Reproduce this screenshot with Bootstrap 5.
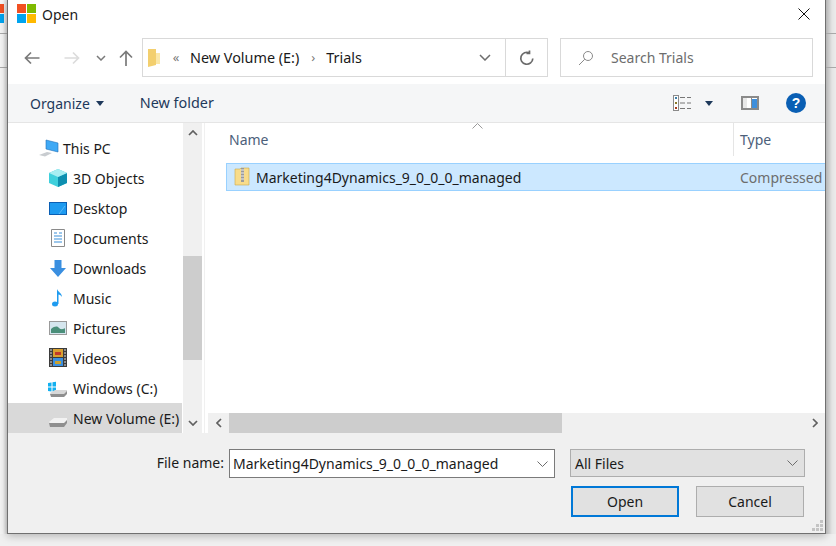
<!DOCTYPE html>
<html lang="en">
<head>
  <meta charset="UTF-8" />
  <meta name="viewport" content="width=device-width, initial-scale=1.0"/>
  <title>Open</title>
  <link href="https://cdn.jsdelivr.net/npm/bootstrap@5.3.2/dist/css/bootstrap.min.css" rel="stylesheet">
  <style>
    body {
      background-color: #f0f0f0;
      font-family: "Noto Sans", "Open Sans", sans-serif;
      font-size: 14px;
      color: #1a1a1a;
      width: 836px;
      height: 546px;
      overflow: hidden;
    }
    svg { display: block; flex: none; }
    .back-left, .back-right { height: 534px; }
    .back-left { width: 7px; background: linear-gradient(90deg, #f4f4f4 0, #f4f4f4 3px, #d4d4d4 7px); }
    .back-right { width: 10px; background: linear-gradient(90deg, #b4b4b4 0, #e4e4e4 6px, #ececec 10px); }
    .back-seg { height: 34px; border-bottom: 1px solid #a8a8a8; }
    .dlg {
      width: 819px;
      height: 534px;
      background: #fff;
      border: 1px solid #707070;
      border-top: 0;
      box-shadow: 0 2px 8px rgba(0,0,0,.25);
    }
    .title-bar { height: 30px; padding: 4px 15px 0 9px; }
    .title-text { margin-left: 6px; line-height: 22px; }
    .nav-bar { height: 54px; padding: 8px 12px 7px 16px; }
    .nav-arrows { width: 118px; }
    .up-arrow { margin-left: 13px; }
    .addr-box, .search-box { height: 39px; border: 1px solid #d9d9d9; }
    .addr-box { width: 406px; font-size: 14.4px; }
    .addr-folder { margin-left: 5px; }
    .addr-mark { color: #7a7a7a; font-size: 13px; width: 12px; text-align: center; }
    .addr-mark.first { margin-left: 10px; }
    .addr-vol { margin-left: 8px; }
    .addr-sep { margin-left: 8px; }
    .addr-leaf { margin-left: 7px; }
    .addr-drop { margin-right: 14px; }
    .addr-btn { width: 42px; height: 100%; border-left: 1px solid #d9d9d9; }
    .search-box { width: 253px; margin-left: 12px; padding-left: 17px; color: #6d6d6d; }
    .search-text { margin-left: 17px; }
    .tool-bar { height: 39px; background: #f5f6f7; border-bottom: 1px solid #e5e5e5; padding: 0 19px 0 22px; color: #1e395b; }
    .tool-new { margin-left: 36px; font-size: 14.4px; }
    .caret-down { width: 0; height: 0; border: 4px solid transparent; border-top: 5px solid #1e395b; border-bottom: 0; margin-left: 6px; }
    .caret-view { margin-left: 14px; }
    .pane-ico { margin-left: 28px; }
    .help-ico { margin-left: 27px; }
    .panes { height: 310px; }
    .tree-pane { width: 174px; padding-top: 10px; }
    .tree-row { height: 30px; padding-left: 40px; gap: 6px; white-space: nowrap; }
    .tree-row.top { padding-left: 32px; gap: 4px; }
    .tree-row.active { background: #d9d9d9; }
    .tree-ico { width: 20px; height: 20px; margin-left: -1px; }
    .vscroll { width: 19px; margin-left: 1px; background: #f0f0f0; }
    .vscroll-thumb { height: 104px; background: #cdcdcd; }
    .vscroll-track { height: 113px; }
    .sb-arrow { height: 20px; }
    .split { width: 3px; background: #fff; border-right: 1px solid #f0f0f0; }
    .list-pane { min-width: 0; }
    .list-head { height: 33px; color: #4c607a; padding-left: 24px; }
    .head-name { width: 504px; }
    .head-type { padding-left: 6px; height: 100%; border-left: 1px solid #e5e5e5; }
    .sort-up { top: 0; left: 267px; }
    .list-body { padding: 7px 0 0 21px; }
    .file-row { height: 28px; background: #cce8ff; border: 1px solid #99d1ff; border-right: 0; padding-left: 7px; white-space: nowrap; }
    .file-name { width: 484px; margin-left: 6px; }
    .file-type { color: #6d6d6d; }
    .hscroll { height: 20px; background: #f0f0f0; margin-left: 3px; }
    .hscroll-thumb { width: 333px; background: #cdcdcd; height: 100%; }
    .hs-btn { width: 21px; height: 100%; }
    .dlg-foot { position: relative; height: 100px; background: #f0f0f0; padding: 16px 20px 0 0; }
    .foot-label { width: 221px; text-align: right; padding-right: 5px; }
    .name-box { width: 326px; height: 29px; background: #fff; border: 1px solid #7a7a7a; padding: 0 6px 0 3px; }
    .type-box { width: 235px; height: 28px; margin-left: 15px; background: #e1e1e1; border: 1px solid #adadad; padding: 0 6px 0 4px; }
    .foot-btn { width: 108px; height: 31px; padding: 0; font-size: 14px; border-radius: 0; color: #1a1a1a; background: #e1e1e1; border: 1px solid #adadad; }
    .foot-btn.default-btn { border: 2px solid #0078d7; }
    .btn-row { margin-top: 8px; margin-left: 563px; gap: 17px; }
    .grip { right: 1px; bottom: 1px; }
  </style>
</head>
<body class="d-flex">
  <!-- window behind the dialog -->
  <div class="back-left">
    <div class="back-seg pt-1">
      <svg width="4" height="19" viewBox="0 0 4 19"><rect width="4" height="9" fill="#f25022"/><rect y="10" width="4" height="9" fill="#00a4ef"/></svg>
    </div>
    <div class="back-seg"></div>
  </div>

  <div class="dlg d-flex flex-column">
    <!-- title -->
    <div class="title-bar d-flex align-items-start">
      <svg width="19" height="19" viewBox="0 0 19 19"><rect width="9" height="9" fill="#f25022"/><rect x="10" width="9" height="9" fill="#7fba00"/><rect y="10" width="9" height="9" fill="#00a4ef"/><rect x="10" y="10" width="9" height="9" fill="#ffb900"/></svg>
      <span class="title-text">Open</span>
      <svg class="ms-auto mt-1" width="12" height="12" viewBox="0 0 12 12"><path d="M.5.5l11 11M11.500.5l-11 11" stroke="#111" fill="none"/></svg>
    </div>

    <!-- nav -->
    <div class="nav-bar d-flex align-items-center">
      <div class="nav-arrows d-flex align-items-center">
        <svg width="16" height="14" viewBox="0 0 16 14"><path d="M15.500 7H1.500M7 1.500L1.500 7 7 12.500" stroke="#7a7a7a" stroke-width="1.700" fill="none"/></svg>
        <svg class="ms-4" width="16" height="14" viewBox="0 0 16 14"><path d="M.5 7h14M9 1.500L14.500 7 9 12.500" stroke="#dcdcdc" stroke-width="1.700" fill="none"/></svg>
        <svg class="ms-3" width="10" height="6" viewBox="0 0 10 6"><path d="M1 1l4 4 4-4" stroke="#7a7a7a" stroke-width="1.500" fill="none"/></svg>
        <svg class="up-arrow" width="14" height="16" viewBox="0 0 14 16"><path d="M7 16V1.500M1 7.500l6-6 6 6" stroke="#7a7a7a" stroke-width="1.700" fill="none"/></svg>
      </div>
      <div class="addr-box d-flex align-items-center">
        <svg class="addr-folder" width="12" height="18" viewBox="0 0 12 18"><path d="M0 0h8v16l-8 2z" fill="#f3cf6e"/><path d="M8 4h4v11H8z" fill="#fbe7a8"/></svg>
        <span class="addr-mark first">«</span>
        <span class="addr-vol">New Volume (E:)</span>
        <span class="addr-mark addr-sep">›</span>
        <span class="addr-leaf">Trials</span>
        <svg class="ms-auto addr-drop" width="12" height="7" viewBox="0 0 12 7"><path d="M1 1l5 5 5-5" stroke="#6d6d6d" stroke-width="1.500" fill="none"/></svg>
        <div class="addr-btn d-flex align-items-center justify-content-center">
          <svg width="16" height="16" viewBox="0 0 16 16"><path d="M13.800 8.500a6 6 0 1 1-3.300-5.600M10.500.5v3h-3" stroke="#6a6a6a" stroke-width="1.700" fill="none"/></svg>
        </div>
      </div>
      <div class="search-box d-flex align-items-center">
        <svg width="16" height="16" viewBox="0 0 16 16"><circle cx="10" cy="6" r="4.500" stroke="#8a8a8a" fill="none"/><path d="M6.800 9.200L1 15" stroke="#8a8a8a" fill="none"/></svg>
        <span class="search-text">Search Trials</span>
      </div>
    </div>

    <!-- toolbar -->
    <div class="tool-bar d-flex align-items-center">
      <span>Organize</span><span class="caret-down"></span>
      <span class="tool-new">New folder</span>
      <svg class="ms-auto" width="18" height="16" viewBox="0 0 18 16"><rect x=".5" y=".5" width="5" height="15" fill="#fff" stroke="#8a8a8a"/><path d="M2 2h2v2H2z" fill="#3d7fa8"/><path d="M2 7h2v2H2z" fill="#8a7a2a"/><path d="M2 12h2v2H2z" fill="#a83a1e"/><path d="M7 2.500h5M14 2.500h4M7 8h5M14 8h4M7 13.500h5M14 13.500h4" stroke="#777"/></svg>
      <span class="caret-down caret-view"></span>
      <svg class="pane-ico" width="18" height="14" viewBox="0 0 18 14"><rect x="1" y="1" width="16" height="12" fill="#fff" stroke="#8a8a8a" stroke-width="2"/><rect x="2" y="2" width="4" height="10" fill="#e8e8e8"/><path d="M10.500 1v12" stroke="#8a8a8a"/><rect x="11" y="3" width="5" height="9" fill="#3f8fdc"/></svg>
      <svg class="help-ico" width="20" height="20" viewBox="0 0 20 20"><circle cx="10" cy="10" r="10" fill="#0a5fb4"/><text x="10" y="15" text-anchor="middle" fill="#fff" font-size="14" font-weight="700" font-family="Liberation Sans, sans-serif">?</text></svg>
    </div>

    <!-- panes -->
    <div class="panes d-flex">
      <div class="tree-pane">
        <div class="tree-row top d-flex align-items-center">
          <svg class="tree-ico" viewBox="0 0 20 20"><path d="M7 2l12 3v9L7 11z" fill="#3fa9f5" stroke="#1e6fb8" stroke-width=".6"/><path d="M0 17l8-3 5 1-7 3.500z" fill="#c8ccd0"/></svg>
          <span>This PC</span>
        </div>
        <div class="tree-row d-flex align-items-center">
          <svg class="tree-ico" viewBox="0 0 20 20"><path d="M11 1l9 4v10l-9 4-9-4V5z" fill="#3fd0dc"/><path d="M11 9l9-4v10l-9 4z" fill="#0e8fb0"/><path d="M11 1l9 4-9 4-9-4z" fill="#a8eef2"/></svg>
          <span>3D Objects</span>
        </div>
        <div class="tree-row d-flex align-items-center">
          <svg class="tree-ico" viewBox="0 0 20 20"><rect x="2.500" y="4.500" width="17" height="12" fill="#1e9bf0" stroke="#0a5fb4"/><path d="M12 16l6-8" stroke="#5cb8f5"/></svg>
          <span>Desktop</span>
        </div>
        <div class="tree-row d-flex align-items-center">
          <svg class="tree-ico" viewBox="0 0 20 20"><path d="M4.500 1.500h13v17h-13z" fill="#fff" stroke="#8a8a8a"/><path d="M7 5h3M12 5h3M7 8h8M7 11h8M7 14h8" stroke="#3a8fd8"/></svg>
          <span>Documents</span>
        </div>
        <div class="tree-row d-flex align-items-center">
          <svg class="tree-ico" viewBox="0 0 20 20"><path d="M7.500 2h7v8H19l-8 9-8-9h4.500z" fill="#3a8fe0"/></svg>
          <span>Downloads</span>
        </div>
        <div class="tree-row d-flex align-items-center">
          <svg class="tree-ico" viewBox="0 0 20 20"><ellipse cx="8" cy="16" rx="3" ry="2.500" fill="#1e9bf0"/><path d="M10 16V1c1 3 5 4 5 8-1-1.500-2-2.500-3.500-2.500V16z" fill="#1e9bf0"/></svg>
          <span>Music</span>
        </div>
        <div class="tree-row d-flex align-items-center">
          <svg class="tree-ico" viewBox="0 0 20 20"><rect x="2.500" y="3.500" width="17" height="13" fill="#d5e6ee" stroke="#9a9a9a"/><path d="M4 11c4-3 6-3 8-1s5 1 6 0v5H4z" fill="#4a8f7a"/></svg>
          <span>Pictures</span>
        </div>
        <div class="tree-row d-flex align-items-center">
          <svg class="tree-ico" viewBox="0 0 20 20"><rect x="2" width="18" height="19" fill="#3b3b3b"/><rect x="6" y="1" width="10" height="8" fill="#d8a030"/><rect x="6" y="10" width="10" height="8" fill="#3a8fe0"/><path d="M8 4h6v3H8z" fill="#c0392b"/><path d="M8 13h6v3H8z" fill="#c8a030"/><path d="M3 2h2M3 5h2M3 8h2M3 11h2M3 14h2M3 17h2M17 2h2M17 5h2M17 8h2M17 11h2M17 14h2M17 17h2" stroke="#ddd"/></svg>
          <span>Videos</span>
        </div>
        <div class="tree-row d-flex align-items-center">
          <svg class="tree-ico" viewBox="0 0 20 20"><path d="M1 5l3.500-.5V8.500H1zM5.500 4.300L9 3.800V8.500H5.500zM1 9.500h3.500v4L1 13zM5.500 9.500H9v4.500l-3.500-.5z" fill="#12b0f0"/><path d="M3 15l5-3h12v3l-3 2H4z" fill="#d8d8d8"/><path d="M3 16h14l3-3v3l-3 3H4z" fill="#8f8f8f"/></svg>
          <span>Windows (C:)</span>
        </div>
        <div class="tree-row active d-flex align-items-center">
          <svg class="tree-ico" viewBox="0 0 20 20"><path d="M2 14l5-4h13v3l-3 3H4z" fill="#f2f2f2"/><path d="M2 15h15l3-3v3l-3 4H3z" fill="#8f8f8f"/></svg>
          <span>New Volume (E:)</span>
        </div>
      </div>
      <div class="vscroll d-flex flex-column">
        <div class="sb-arrow d-flex align-items-center justify-content-center"><svg width="10" height="6" viewBox="0 0 10 6"><path d="M1 5l4-4 4 4" stroke="#606060" stroke-width="1.700" fill="none"/></svg></div>
        <div class="vscroll-track"></div>
        <div class="vscroll-thumb"></div>
        <div class="flex-grow-1"></div>
        <div class="sb-arrow d-flex align-items-center justify-content-center"><svg width="10" height="6" viewBox="0 0 10 6"><path d="M1 1l4 4 4-4" stroke="#606060" stroke-width="1.700" fill="none"/></svg></div>
      </div>
      <div class="split"></div>
      <div class="list-pane flex-grow-1 d-flex flex-column">
        <div class="list-head d-flex align-items-center position-relative">
          <div class="head-name">Name</div>
          <div class="head-type d-flex align-items-center">Type</div>
          <svg class="sort-up position-absolute" width="11" height="6" viewBox="0 0 11 6"><path d="M.5 5.500l5-5 5 5" stroke="#9a9a9a" fill="none"/></svg>
        </div>
        <div class="list-body flex-grow-1">
          <div class="file-row d-flex align-items-center">
            <svg width="16" height="20" viewBox="0 0 16 20"><path d="M1 2h5l1-1h8v17H1z" fill="#f8dc8a" stroke="#c9a84a" stroke-width=".6"/><path d="M7 1h3v14H7z" fill="#9a9a9a"/><path d="M7 3h3M7 6h3M7 9h3M7 12h3" stroke="#eee"/></svg>
            <span class="file-name">Marketing4Dynamics_9_0_0_0_managed</span>
            <span class="file-type">Compressed</span>
          </div>
        </div>
        <div class="hscroll d-flex align-items-center">
          <div class="hs-btn d-flex align-items-center justify-content-center"><svg width="6" height="10" viewBox="0 0 6 10"><path d="M5 1L1 5l4 4" stroke="#606060" stroke-width="1.700" fill="none"/></svg></div>
          <div class="hscroll-thumb"></div>
          <div class="hs-btn ms-auto d-flex align-items-center justify-content-center"><svg width="6" height="10" viewBox="0 0 6 10"><path d="M1 1l4 4-4 4" stroke="#606060" stroke-width="1.700" fill="none"/></svg></div>
        </div>
      </div>
    </div>

    <!-- footer -->
    <div class="dlg-foot flex-grow-1">
      <div class="d-flex align-items-start">
        <div class="foot-label lh-lg">File name:</div>
        <div class="name-box d-flex align-items-center">
          <span>Marketing4Dynamics_9_0_0_0_managed</span>
          <svg class="ms-auto" width="11" height="6" viewBox="0 0 11 6"><path d="M.5.500l5 5 5-5" stroke="#6d6d6d" fill="none"/></svg>
        </div>
        <div class="type-box d-flex align-items-center">
          <span>All Files</span>
          <svg class="ms-auto" width="11" height="6" viewBox="0 0 11 6"><path d="M.5.500l5 5 5-5" stroke="#6d6d6d" fill="none"/></svg>
        </div>
      </div>
      <div class="btn-row d-flex">
        <button type="button" class="btn foot-btn default-btn">Open</button>
        <button type="button" class="btn foot-btn">Cancel</button>
      </div>
      <svg class="grip position-absolute" width="12" height="12" viewBox="0 0 12 12"><path d="M8 0h3v3H8zM4 4h3v3H4zM8 4h3v3H8zM0 8h3v3H0zM4 8h3v3H4zM8 8h3v3H8z" fill="#c4c4c4"/></svg>
    </div>
  </div>

  <div class="back-right">
    <div class="back-seg"></div>
    <div class="back-seg"></div>
  </div>
</body>
</html>
